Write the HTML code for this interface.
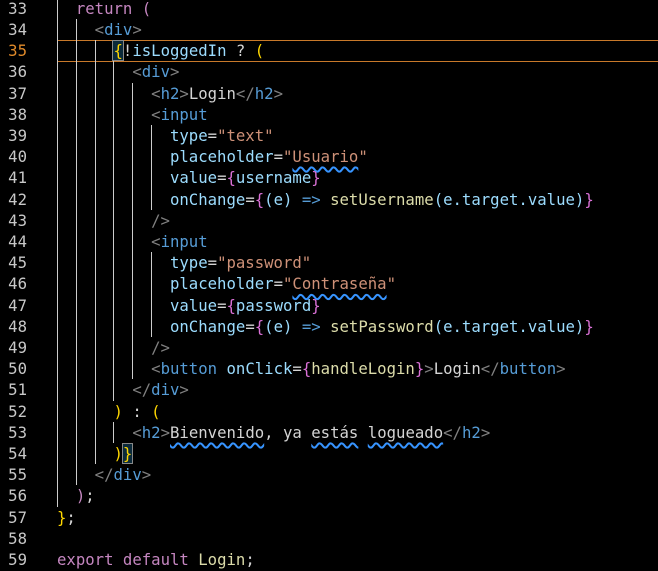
<!DOCTYPE html>
<html><head><style>
body{margin:0;background:#000;width:658px;height:571px;overflow:hidden;position:relative;font-family:"DejaVu Sans Mono","Liberation Mono",monospace;font-size:15.65px}
.l{position:absolute;left:0;height:21.2px;line-height:21.2px;white-space:pre;width:658px}
.num{position:absolute;right:631px;color:#c8c8c8;text-align:right}
.code{position:absolute;left:57px;color:#d4d4d4}
.g{display:inline-block;width:2ch;height:21.2px;vertical-align:top;box-shadow:inset 1px 0 0 #ccc}
.k{color:#c586c0}.t{color:#808080}.n{color:#569cd6}.a{color:#9cdcfe}.s{color:#ce9178}.f{color:#dcdcaa}.y{color:#ffd700}.p{color:#da70d6}.b{color:#179fff}
.u{text-decoration:underline wavy #3794ff;text-decoration-thickness:1.5px;text-underline-offset:4px}
.cur{background:#0b2a3a;outline:1px solid #888}
.hl{position:absolute;left:57px;right:0;top:40.2px;height:20px;border-top:1px solid #c8792a;border-bottom:1px solid #c8792a}
</style></head><body>
<div class="hl"></div>
<div class="l" style="top:-2.2px"><span class="num">33</span><span class="code"><span class="g"></span><span class="k">return</span> <span class="k">(</span></span></div>
<div class="l" style="top:19px"><span class="num">34</span><span class="code"><span class="g"></span><span class="g"></span><span class="t">&lt;</span><span class="n">div</span><span class="t">&gt;</span></span></div>
<div class="l" style="top:40.2px"><span class="num" style="color:#e08a2a">35</span><span class="code"><span class="g"></span><span class="g"></span><span class="g"></span><span class="cur y">{</span>!<span class="a">isLoggedIn</span> ? <span class="y">(</span></span></div>
<div class="l" style="top:61.4px"><span class="num">36</span><span class="code"><span class="g"></span><span class="g"></span><span class="g"></span><span class="g"></span><span class="t">&lt;</span><span class="n">div</span><span class="t">&gt;</span></span></div>
<div class="l" style="top:82.6px"><span class="num">37</span><span class="code"><span class="g"></span><span class="g"></span><span class="g"></span><span class="g"></span><span class="g"></span><span class="t">&lt;</span><span class="n">h2</span><span class="t">&gt;</span>Login<span class="t">&lt;/</span><span class="n">h2</span><span class="t">&gt;</span></span></div>
<div class="l" style="top:103.8px"><span class="num">38</span><span class="code"><span class="g"></span><span class="g"></span><span class="g"></span><span class="g"></span><span class="g"></span><span class="t">&lt;</span><span class="n">input</span></span></div>
<div class="l" style="top:125px"><span class="num">39</span><span class="code"><span class="g"></span><span class="g"></span><span class="g"></span><span class="g"></span><span class="g"></span><span class="g"></span><span class="a">type</span>=<span class="s">"text"</span></span></div>
<div class="l" style="top:146.2px"><span class="num">40</span><span class="code"><span class="g"></span><span class="g"></span><span class="g"></span><span class="g"></span><span class="g"></span><span class="g"></span><span class="a">placeholder</span>=<span class="s">"<span class="u">Usuario</span>"</span></span></div>
<div class="l" style="top:167.4px"><span class="num">41</span><span class="code"><span class="g"></span><span class="g"></span><span class="g"></span><span class="g"></span><span class="g"></span><span class="g"></span><span class="a">value</span>=<span class="p">{</span><span class="a">username</span><span class="p">}</span></span></div>
<div class="l" style="top:188.6px"><span class="num">42</span><span class="code"><span class="g"></span><span class="g"></span><span class="g"></span><span class="g"></span><span class="g"></span><span class="g"></span><span class="a">onChange</span>=<span class="p">{</span><span class="a">(e)</span> <span class="n">=&gt;</span> <span class="f">setUsername</span><span class="a">(e.target.value)</span><span class="p">}</span></span></div>
<div class="l" style="top:209.8px"><span class="num">43</span><span class="code"><span class="g"></span><span class="g"></span><span class="g"></span><span class="g"></span><span class="g"></span><span class="t">/&gt;</span></span></div>
<div class="l" style="top:231px"><span class="num">44</span><span class="code"><span class="g"></span><span class="g"></span><span class="g"></span><span class="g"></span><span class="g"></span><span class="t">&lt;</span><span class="n">input</span></span></div>
<div class="l" style="top:252.2px"><span class="num">45</span><span class="code"><span class="g"></span><span class="g"></span><span class="g"></span><span class="g"></span><span class="g"></span><span class="g"></span><span class="a">type</span>=<span class="s">"password"</span></span></div>
<div class="l" style="top:273.4px"><span class="num">46</span><span class="code"><span class="g"></span><span class="g"></span><span class="g"></span><span class="g"></span><span class="g"></span><span class="g"></span><span class="a">placeholder</span>=<span class="s">"<span class="u">Contraseña</span>"</span></span></div>
<div class="l" style="top:294.6px"><span class="num">47</span><span class="code"><span class="g"></span><span class="g"></span><span class="g"></span><span class="g"></span><span class="g"></span><span class="g"></span><span class="a">value</span>=<span class="p">{</span><span class="a">password</span><span class="p">}</span></span></div>
<div class="l" style="top:315.8px"><span class="num">48</span><span class="code"><span class="g"></span><span class="g"></span><span class="g"></span><span class="g"></span><span class="g"></span><span class="g"></span><span class="a">onChange</span>=<span class="p">{</span><span class="a">(e)</span> <span class="n">=&gt;</span> <span class="f">setPassword</span><span class="a">(e.target.value)</span><span class="p">}</span></span></div>
<div class="l" style="top:337px"><span class="num">49</span><span class="code"><span class="g"></span><span class="g"></span><span class="g"></span><span class="g"></span><span class="g"></span><span class="t">/&gt;</span></span></div>
<div class="l" style="top:358.2px"><span class="num">50</span><span class="code"><span class="g"></span><span class="g"></span><span class="g"></span><span class="g"></span><span class="g"></span><span class="t">&lt;</span><span class="n">button</span> <span class="a">onClick</span>=<span class="p">{</span><span class="f">handleLogin</span><span class="p">}</span><span class="t">&gt;</span>Login<span class="t">&lt;/</span><span class="n">button</span><span class="t">&gt;</span></span></div>
<div class="l" style="top:379.4px"><span class="num">51</span><span class="code"><span class="g"></span><span class="g"></span><span class="g"></span><span class="g"></span><span class="t">&lt;/</span><span class="n">div</span><span class="t">&gt;</span></span></div>
<div class="l" style="top:400.6px"><span class="num">52</span><span class="code"><span class="g"></span><span class="g"></span><span class="g"></span><span class="y">)</span> : <span class="y">(</span></span></div>
<div class="l" style="top:421.8px"><span class="num">53</span><span class="code"><span class="g"></span><span class="g"></span><span class="g"></span><span class="g"></span><span class="t">&lt;</span><span class="n">h2</span><span class="t">&gt;</span><span class="u">Bienvenido</span>, ya <span class="u">estás</span> <span class="u">logueado</span><span class="t">&lt;/</span><span class="n">h2</span><span class="t">&gt;</span></span></div>
<div class="l" style="top:443px"><span class="num">54</span><span class="code"><span class="g"></span><span class="g"></span><span class="g"></span><span class="y">)</span><span class="cur y">}</span></span></div>
<div class="l" style="top:464.2px"><span class="num">55</span><span class="code"><span class="g"></span><span class="g"></span><span class="t">&lt;/</span><span class="n">div</span><span class="t">&gt;</span></span></div>
<div class="l" style="top:485.4px"><span class="num">56</span><span class="code"><span class="g"></span><span class="k">)</span>;</span></div>
<div class="l" style="top:506.6px"><span class="num">57</span><span class="code"><span class="y">}</span>;</span></div>
<div class="l" style="top:527.8px"><span class="num">58</span></div>
<div class="l" style="top:549px"><span class="num">59</span><span class="code"><span class="k">export</span> <span class="k">default</span> <span class="f">Login</span>;</span></div>
</body></html>
